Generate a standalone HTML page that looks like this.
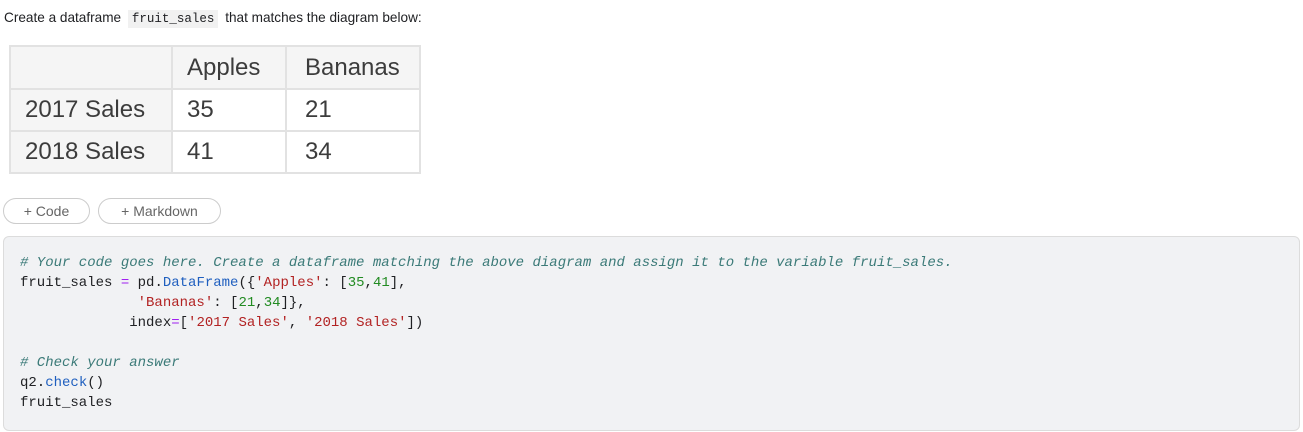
<html><head><style>
body{margin:0;width:1303px;height:432px;background:#fff;font-family:"Liberation Sans",sans-serif;position:relative;overflow:hidden}
.p{position:absolute;left:4px;top:10px;font-size:13.6px;color:#202124}
.p code{font-family:"Liberation Mono",monospace;background:#f1f1f1;padding:2px 4px;font-size:12.5px;margin:0 3px}
table{position:absolute;left:9px;top:45px;border-collapse:collapse;font-size:24px;color:#3c3c3c;table-layout:fixed;width:410px}
td{border:2px solid #e2e2e2;height:38px;padding:0 0 0 14px;background:#fff;box-sizing:border-box}
td.h{background:#f5f5f5}
.b{position:absolute;top:198px;height:24px;border:1px solid #ccc;border-radius:13px;font-size:14px;color:#666;line-height:24px;box-sizing:content-box}
.cell{position:absolute;left:3px;top:236px;width:1295px;height:193px;background:#f1f2f4;border:1px solid #dcdcdc;border-radius:6px}
pre{position:absolute;left:20px;top:253px;margin:0;font-family:"Liberation Mono",monospace;font-size:14px;line-height:20px;color:#202124}
.c{color:#3b7a78;font-style:italic}.s{color:#b22222}.n{color:#228b22}.o{color:#a020f0}.f{color:#1f5fbf}
</style></head><body>
<div class="p">Create a dataframe <code>fruit_sales</code> that matches the diagram below:</div>
<table>
<col style="width:162px"><col style="width:114px"><col style="width:134px">
<tr style="height:43px"><td class="h"></td><td class="h">Apples</td><td class="h" style="padding-left:18px">Bananas</td></tr>
<tr style="height:42px"><td class="h">2017 Sales</td><td>35</td><td style="padding-left:18px">21</td></tr>
<tr style="height:42px"><td class="h">2018 Sales</td><td>41</td><td style="padding-left:18px">34</td></tr>
</table>
<div class="b" style="left:3px;width:85px;text-align:center">+ Code</div>
<div class="b" style="left:98px;width:121px;text-align:center">+ Markdown</div>
<div class="cell"></div>
<pre><span class="c"># Your code goes here. Create a dataframe matching the above diagram and assign it to the variable fruit_sales.</span>
fruit_sales <span class="o">=</span> pd.<span class="f">DataFrame</span>({<span class="s">'Apples'</span>: [<span class="n">35</span>,<span class="n">41</span>],
              <span class="s">'Bananas'</span>: [<span class="n">21</span>,<span class="n">34</span>]},
             index<span class="o">=</span>[<span class="s">'2017 Sales'</span>, <span class="s">'2018 Sales'</span>])

<span class="c"># Check your answer</span>
q2.<span class="f">check</span>()
fruit_sales</pre>
</body></html>
